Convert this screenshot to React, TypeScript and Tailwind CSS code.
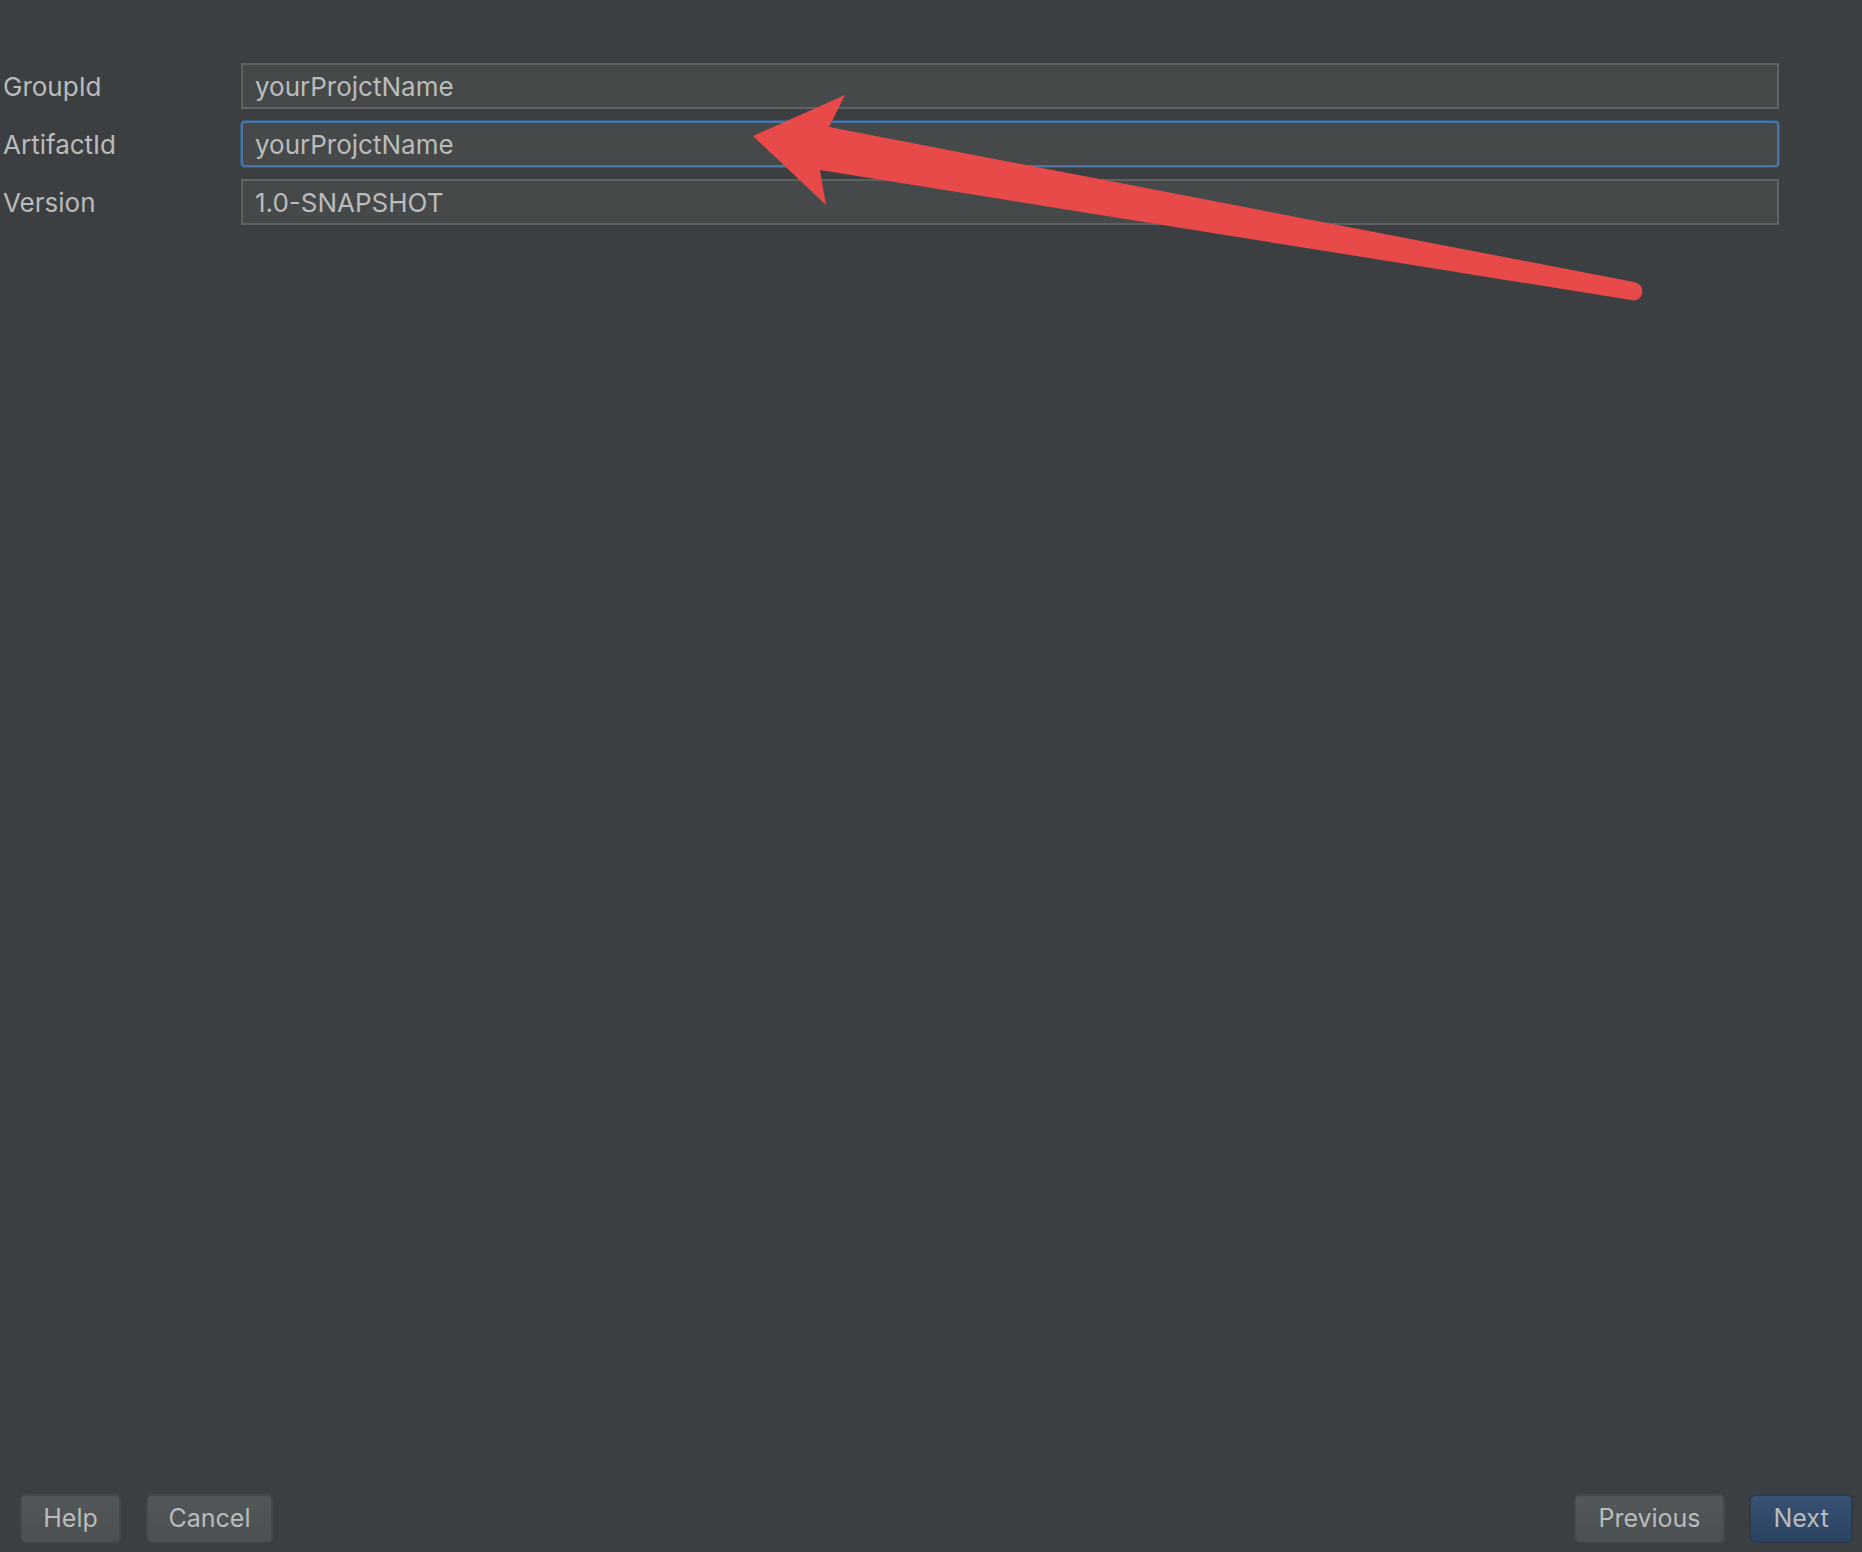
import React from 'react';

const fields = [
  { label: 'GroupId', value: 'yourProjctName', focused: false },
  { label: 'ArtifactId', value: 'yourProjctName', focused: true },
  { label: 'Version', value: '1.0-SNAPSHOT', focused: false },
];

function Field({ label, value, focused }: { label: string; value: string; focused: boolean }) {
  return (
    <div className="flex items-center h-[46px]">
      <label className="w-[241px] shrink-0 pl-[3px] text-[26px] text-[#bbbbbb]">{label}</label>
      <div
        className={`w-[1538px] h-[46px] flex items-center pl-[12px] text-[26px] text-[#bbbbbb] bg-[#45494a] ${
          focused
            ? 'border-2 border-[#4a74a4] rounded-[4px] shadow-[0_0_0_1px_#3b5a80]'
            : 'border-2 border-[#5f6162]'
        }`}
      >
        {value}
      </div>
    </div>
  );
}

function Button({ children, primary = false, width }: { children: React.ReactNode; primary?: boolean; width: string }) {
  return (
    <button
      className={`${width} h-[49px] rounded-[6px] border-2 text-[25px] text-[#bbbbbb] flex items-center justify-center ${
        primary
          ? 'bg-gradient-to-b from-[#385273] to-[#2b4262] border-[#2c3a4c]'
          : 'bg-gradient-to-b from-[#52575a] to-[#4b5052] border-[#45494b]'
      }`}
    >
      {children}
    </button>
  );
}

export default function App() {
  return (
    <div
      className="relative w-full h-screen bg-[#3c3f41] flex flex-col"
      style={{ fontFamily: 'Inter, "Liberation Sans", Arial, sans-serif' }}
    >
      {/* 입력 필드 */}
      <div className="flex flex-col gap-[12px] pt-[63px]">
        {fields.map(f => (
          <Field key={f.label} {...f} />
        ))}
      </div>

      <div className="flex-1" />

      {/* 하단 버튼 */}
      <div className="flex items-center justify-between pl-[20px] pr-[9px] pb-[9px]">
        <div className="flex gap-[25px]">
          <Button width="w-[101px]">Help</Button>
          <Button width="w-[127px]">Cancel</Button>
        </div>
        <div className="flex gap-[24px]">
          <Button width="w-[151px]">Previous</Button>
          <Button width="w-[104px]" primary>Next</Button>
        </div>
      </div>

      {/* 빨간 화살표 */}
      <svg className="absolute left-0 top-0 pointer-events-none" width="1862" height="400">
        <path
          d="M 753 136 L 845 95 L 829 127 L 1634 282 Q 1644 285 1642 294 Q 1639 302 1631 300 L 820 170 L 826 205 Z"
          fill="#e84a4a"
        />
      </svg>
    </div>
  );
}
